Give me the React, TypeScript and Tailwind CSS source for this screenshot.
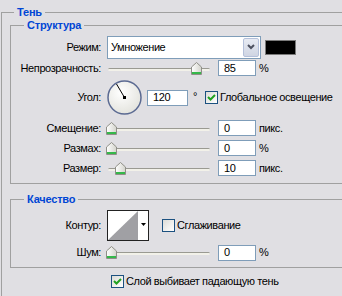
import React from "react";

const labelCls = "w-[90px] shrink-0 text-right text-[11px] leading-[13px] text-black";
const fieldCls =
  "flex h-[16px] shrink-0 items-center border border-[#7f9db9] bg-white pl-[5px] text-[11px] leading-[13px] text-black";
const legendCls = "px-[3px] text-[11px] font-bold leading-[13px] tracking-[-0.2px] text-[#0046d5]";

function Thumb() {
  return (
    <svg width="11" height="13" viewBox="0 0 11 13">
      <defs>
        <linearGradient id="tg" x1="0" y1="0" x2="1" y2="0">
          <stop offset="0" stopColor="#ffffff" />
          <stop offset="1" stopColor="#d4d4cc" />
        </linearGradient>
      </defs>
      <path d="M5.5 0.5 L10.5 5 V12.5 H0.5 V5 Z" fill="url(#tg)" stroke="#8f8f88" />
      <rect x="1" y="10" width="9" height="2" fill="#35b84a" />
    </svg>
  );
}

function Slider({ pos }: { pos: number }) {
  return (
    <div className="relative h-[13px] w-[104px] shrink-0">
      <div className="absolute left-[2px] right-0 top-[6px] h-[3px] rounded-full border-t border-[#9a9a92] bg-[#f2f1e9]" />
      <div className="absolute top-0" style={{ left: pos }}>
        <Thumb />
      </div>
    </div>
  );
}

function Check({ checked }: { checked: boolean }) {
  return (
    <div className="h-[13px] w-[13px] shrink-0 border border-[#1c5180] bg-gradient-to-br from-[#dcdcd7] to-white">
      {checked && (
        <svg width="11" height="11" viewBox="0 0 11 11">
          <path d="M2 5 L4.5 7.5 L9 3" fill="none" stroke="#21a121" strokeWidth="2" />
        </svg>
      )}
    </div>
  );
}

function SliderRow({
  label,
  value,
  unit,
  pos,
}: {
  label: string;
  value: string;
  unit: string;
  pos: number;
}) {
  return (
    <div className="flex h-[20px] items-center">
      <span className={labelCls}>{label}</span>
      <div className="ml-[5px]">
        <Slider pos={pos} />
      </div>
      <div className={`${fieldCls} ml-[8px] w-[38px]`}>{value}</div>
      <span className="ml-[3px] text-[11px] leading-[13px] text-black">{unit}</span>
    </div>
  );
}

function Dial() {
  return (
    <div className="h-[35px] w-[35px] shrink-0">
      <svg width="35" height="35" viewBox="0 0 35 35">
        <defs>
          <radialGradient id="dg" cx="0.4" cy="0.35" r="0.7">
            <stop offset="0" stopColor="#ffffff" />
            <stop offset="1" stopColor="#e2e2dc" />
          </radialGradient>
        </defs>
        <circle cx="17.5" cy="17.5" r="16.5" fill="url(#dg)" stroke="#5b6a92" strokeWidth="1.5" />
        <line x1="17.5" y1="17.5" x2="9.5" y2="4" stroke="#000" strokeWidth="1" />
        <rect x="16" y="16" width="3" height="3" fill="#000" />
      </svg>
    </div>
  );
}

export default function App() {
  return (
    <div className="h-[296px] w-[342px] overflow-hidden bg-[#e0dfe3] pl-[1px] pt-[6px] font-['Liberation_Sans',Arial,sans-serif] tracking-[-0.4px]">
      <fieldset className="h-[320px] w-[360px] border border-[#a0a0a0]">
        <legend className={`ml-[12px] ${legendCls}`}>Тень</legend>

        <fieldset className="ml-[8px] w-[345px] border border-[#a0a0a0] pb-[5px] pt-[3px]">
          <legend className={`ml-[13px] ${legendCls}`}>Структура</legend>

          <div className="flex h-[24px] items-center">
            <span className={labelCls}>Режим:</span>
            <div className="ml-[6px] flex h-[23px] w-[154px] shrink-0 items-center border border-[#7f9db9] bg-white">
              <span className="flex-1 pl-[3px] text-[11px] leading-[13px] text-black">Умножение</span>
              <div className="mr-[1px] flex h-[19px] w-[16px] items-center justify-center rounded-[2px] border border-[#b4c0da] bg-gradient-to-b from-[#e8ebf3] to-[#cfd5e3]">
                <svg width="8" height="6" viewBox="0 0 8 6">
                  <path d="M1 1 L4 4 L7 1" fill="none" stroke="#4d5160" strokeWidth="2" />
                </svg>
              </div>
            </div>
            <div className="ml-[4px] h-[15px] w-[31px] shrink-0 border border-[#7a7a7a] bg-black" />
          </div>

          <div className="flex h-[18px] items-center">
            <span className={labelCls}>Непрозрачность:</span>
            <div className="ml-[5px]">
              <Slider pos={85} />
            </div>
            <div className={`${fieldCls} ml-[8px] w-[38px]`}>85</div>
            <span className="ml-[3px] text-[11px] leading-[13px] text-black">%</span>
          </div>

          <div className="flex h-[41px] items-center">
            <span className={labelCls}>Угол:</span>
            <div className="ml-[6px]">
              <Dial />
            </div>
            <div className={`${fieldCls} ml-[5px] w-[41px]`}>120</div>
            <span className="ml-[5px] self-start pt-[13px] text-[11px] leading-[13px] text-black">°</span>
            <div className="ml-[8px]">
              <Check checked />
            </div>
            <span className="ml-[2px] text-[11px] leading-[13px] text-black">Глобальное освещение</span>
          </div>

          <SliderRow label="Смещение:" value="0" unit="пикс." pos={0} />
          <SliderRow label="Размах:" value="0" unit="%" pos={0} />
          <SliderRow label="Размер:" value="10" unit="пикс." pos={9} />
        </fieldset>

        <fieldset className="ml-[8px] mt-[9px] w-[345px] border border-[#a0a0a0] pb-[4px] pt-[2px]">
          <legend className={`ml-[13px] ${legendCls}`}>Качество</legend>

          <div className="flex h-[34px] items-center">
            <span className={labelCls}>Контур:</span>
            <div className="ml-[6px] h-[31px] w-[42px] shrink-0 border border-[#222]">
              <svg width="40" height="29" viewBox="0 0 40 29">
                <rect width="40" height="29" fill="#fff" />
                <polygon points="0,29 30,0 30,29" fill="#a0a0a4" />
                <polygon points="33,12 38,12 35.5,15" fill="#000" />
              </svg>
            </div>
            <div className="ml-[13px]">
              <Check checked={false} />
            </div>
            <span className="ml-[2px] text-[11px] leading-[13px] text-black">Сглаживание</span>
          </div>

          <div className="flex h-[21px] items-center">
            <span className={labelCls}>Шум:</span>
            <div className="ml-[5px]">
              <Slider pos={0} />
            </div>
            <div className={`${fieldCls} ml-[8px] w-[38px]`}>0</div>
            <span className="ml-[3px] text-[11px] leading-[13px] text-black">%</span>
          </div>
        </fieldset>

        <div className="flex h-[26px] items-center pl-[109px]">
          <Check checked />
          <span className="ml-[2px] text-[11px] leading-[13px] text-black">Слой выбивает падающую тень</span>
        </div>
      </fieldset>
    </div>
  );
}
